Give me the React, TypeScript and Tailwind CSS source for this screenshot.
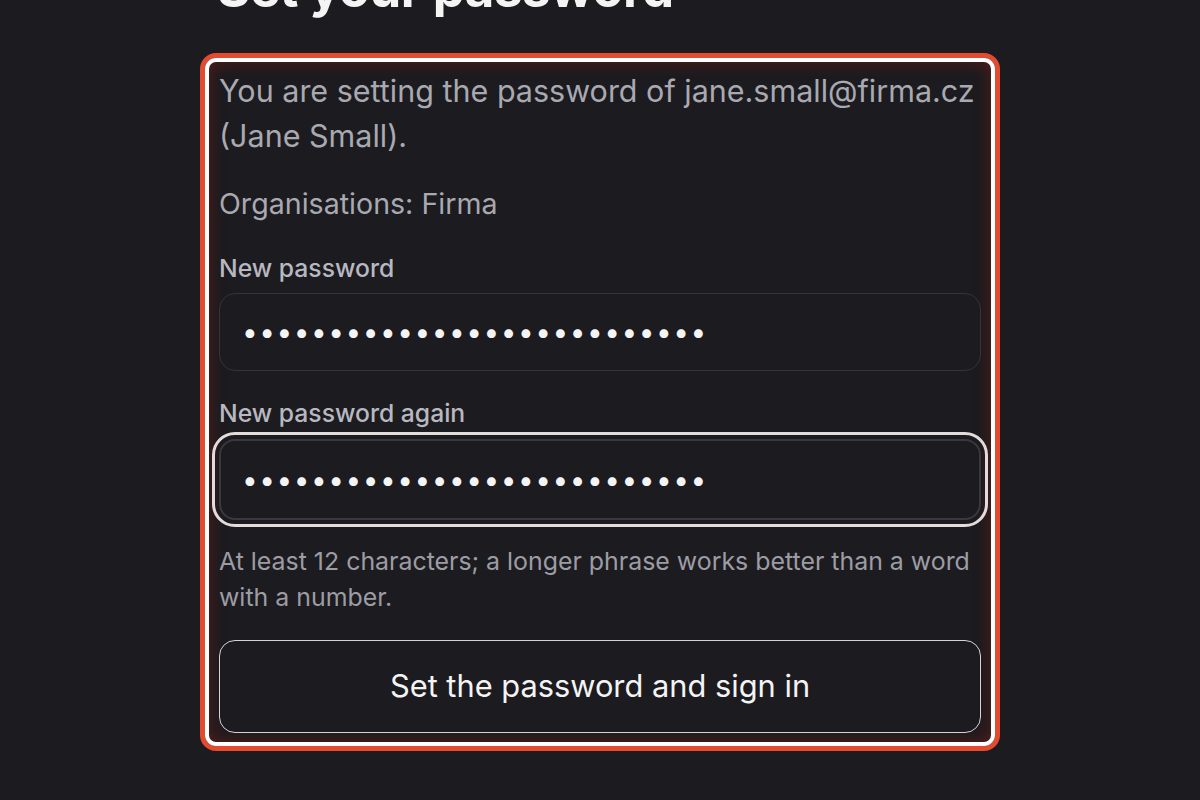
const font = { fontFamily: 'Inter, "Liberation Sans", sans-serif' }

const secret = 'correct-horse-battery-stapl'

export default function App() {
  return (
    <div className="min-h-screen w-full overflow-hidden bg-[#1c1b1f] flex justify-center" style={font}>
      <div className="w-[762px]">
        <h1 className="-mt-[39px] -ml-[2px] text-[51px] leading-[56px] font-bold text-[#f4f4f5] tracking-[-0.5px]">
          Set your password
        </h1>

        <div className="mt-[36px] -mx-[19px] rounded-[16px] border-[5px] border-[#e24b2f]">
          <div className="rounded-[11px] border-4 border-white px-[10px] pt-[6px] pb-[9px] shadow-[inset_0_0_16px_rgba(130,30,20,0.6)]">
            <p className="text-[30.5px] leading-[45px] text-[#a9a9b1]">
              You are setting the password of jane.small@firma.cz (Jane Small).
            </p>
            <p className="mt-[23px] text-[28.6px] leading-[45px] text-[#a9a9b1]">Organisations: Firma</p>

            <label className="mt-[24px] block text-[24.7px] leading-[36px] font-medium text-[#b8b8c0]">New password</label>
            <input
              type="password"
              readOnly
              value={secret}
              className="mt-[7px] block h-[78px] w-full rounded-[16px] border border-[#34343a] bg-[#1c1b1f] px-[22px] text-[28px] text-[#f4f4f5] tracking-[1.5px] focus:outline-none"
              style={font}
            />

            <label className="mt-[24px] block text-[24.7px] leading-[36px] font-medium text-[#b8b8c0]">New password again</label>
            <input
              type="password"
              readOnly
              value={secret}
              className="mt-[8px] block h-[81px] w-full rounded-[16px] border-2 border-[#38383e] bg-[#1c1b1f] px-[21px] text-[28px] text-[#f4f4f5] tracking-[1.5px] outline-[3px] outline-solid outline-[#e3dcdc] outline-offset-[4px]"
              style={font}
            />

            <p className="mt-[23px] text-[24.9px] leading-[36px] text-[#9c9ca4]">
              At least 12 characters; a longer phrase works better than a word with a number.
            </p>

            <button
              type="button"
              className="mt-[25px] block h-[93px] w-full rounded-[16px] border border-[#d4d4d8] bg-[#1c1b1f] text-[30.8px] text-[#f4f4f5]"
              style={font}
            >
              Set the password and sign in
            </button>
          </div>
        </div>
      </div>
    </div>
  )
}
